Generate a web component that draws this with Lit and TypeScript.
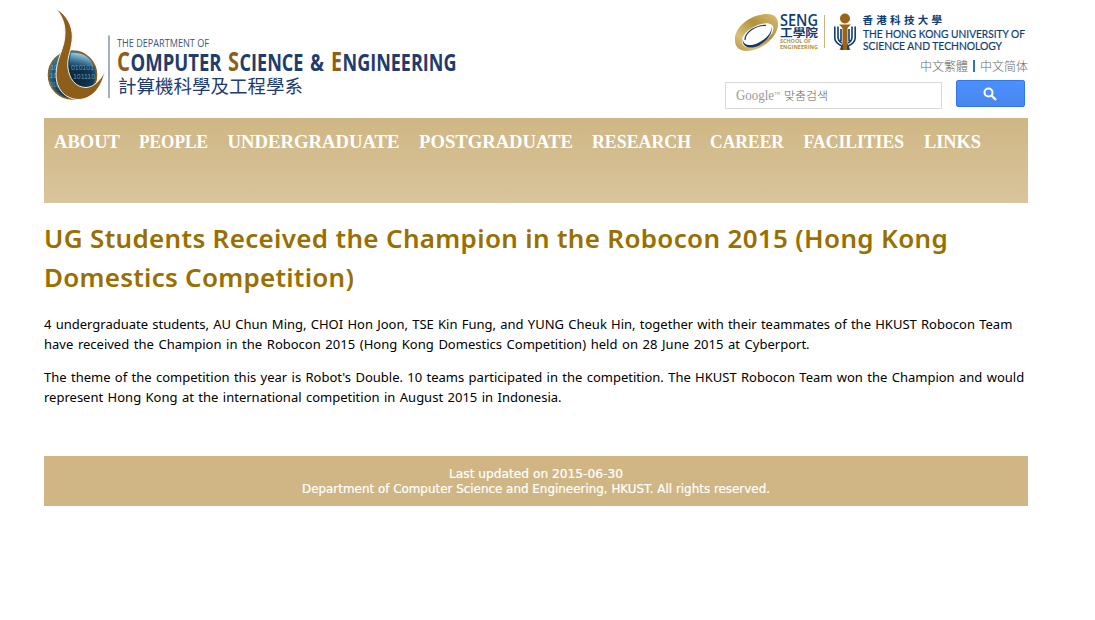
import { LitElement, html, svg, css } from "lit";
import { customElement } from "lit/decorators.js";

const t = (x: number, y: number, size: number, len: number, cls: string, s: string) =>
  svg`<text x=${x} y=${y} font-size=${size} textLength=${len} lengthAdjust="spacingAndGlyphs" class=${cls}>${s}</text>`;

@customElement("dept-logo")
class DeptLogo extends LitElement {
  static styles = css`
    :host { display: block; }
    svg { display: block; overflow: visible; }
    text { font-family: "Open Sans", sans-serif; fill: #1f3c6c; }
    .thin { fill: #3c5680; }
    .b { font-weight: 700; }
    .g { font-weight: 700; fill: #8c5e19; }
    .cjk { font-family: "Noto Sans CJK TC", sans-serif; }
    .bin { font-family: "Liberation Sans", sans-serif; fill: #7fc0dc; opacity: 0.7; }
  `;
  render() {
    return html`<svg width="420" height="118" viewBox="44 0 420 118">
      <defs>
        <radialGradient id="o" cx="0.55" cy="0.6" r="0.6">
          <stop offset="0" stop-color="#0c2438" /><stop offset="0.6" stop-color="#123752" /><stop offset="1" stop-color="#2f80ab" />
        </radialGradient>
        <linearGradient id="h" x1="0.7" y1="0" x2="0.3" y2="1">
          <stop offset="0" stop-color="#c4e2f0" /><stop offset="1" stop-color="#2b789f" stop-opacity="0.3" />
        </linearGradient>
      </defs>
      <circle cx="72.500" cy="75" r="24" fill="url(#o)" stroke="#8c5e19" stroke-width="1.600" />
      <path d="M71 53C82 52 91 57 94 67C86 63 78 68 69 66Z" fill="url(#h)" />
      ${t(50, 70, 6.500, 8, "bin", "10")}${t(49.500, 78, 6.500, 8, "bin", "10")}${t(50, 87, 6.500, 9, "bin", "010")}
      ${t(71, 70, 6.500, 23, "bin", "010101")}${t(73, 79, 6.500, 22, "bin", "101110")}
      <path d="M56 8.500C67 15 72.500 26 72.300 37C72 49 67 56 67.800 67C69 79 76 87.500 86 87.500C95 87 101 79 105 71C102 87 92 99.500 78 99.500C65 99 56 89 56 75C56 58 65 49 65 33C65 23 62 16 56 8.500Z" fill="#8c5e19" stroke="#fff" stroke-width="0.900" />
      <path d="M109 35.500V98" stroke="#8792b3" stroke-width="1.500" />
      ${t(117, 47, 10.800, 92, "thin", "THE DEPARTMENT OF")}
      ${t(117, 70.500, 27, 13, "g", "C")}${t(130.500, 70.500, 23.700, 91, "b", "OMPUTER")}
      ${t(228, 70.500, 27, 11, "g", "S")}${t(239.500, 70.500, 23.700, 64, "b", "CIENCE")}
      ${t(310, 70.500, 23.700, 14, "b", "&")}
      ${t(331, 70.500, 27, 11, "g", "E")}${t(342.500, 70.500, 23.700, 114, "b", "NGINEERING")}
      ${t(118, 93, 18.5, 185, "cjk", "計算機科學及工程學系")}
    </svg>`;
  }
}

@customElement("school-logo")
class SchoolLogo extends LitElement {
  static styles = css`
    :host { display: block; }
    svg { display: block; overflow: visible; }
    text { font-family: Lato, sans-serif; fill: #0f3c74; }
    .m { stroke: #0f3c74; stroke-width: 0.2px; }
    .s { font-family: "Open Sans", sans-serif; font-weight: 600; }
    .g { fill: #b09343; font-family: "Open Sans", sans-serif; font-weight: 700; }
    .cjk { font-family: "Noto Sans CJK TC", sans-serif; font-weight: 700; }
  `;
  render() {
    return html`<svg width="296" height="56" viewBox="732 0 296 56">
      <defs>
        <linearGradient id="r" x1="0" y1="1" x2="1" y2="0">
          <stop offset="0" stop-color="#b3913b" /><stop offset="0.25" stop-color="#d9c178" /><stop offset="0.6" stop-color="#b3913b" /><stop offset="1" stop-color="#d9c178" />
        </linearGradient>
      </defs>
      <path fill-rule="evenodd" fill="url(#r)" d="M735 40C734 27 751 14 767 14C777 14 780 21 777 30C772 43 757 51 747 51C739 51 735 47 735 40ZM742 42C743 49 753 49 762 43C771 37 776 29 772 25C765 19 741 30 742 42Z" />
      <path fill="#15346c" d="M743 38C742 45 750 47 758 43C768 38 773 31 771 25C774 33 767 41 759 45.500C750 50 741 47 743 38Z" />
      <path fill="none" stroke="#15346c" stroke-width="1.200" d="M745 40C745 32 756 25 766 25.500" />
      ${t(780, 26, 16, 38, "s", "SENG")}
      ${t(780, 37, 11, 38, "cjk", "工學院")}
      ${t(780, 43, 5.8, 31, "g", "SCHOOL OF")}
      ${t(780, 49, 5.8, 38, "g", "ENGINEERING")}
      <path d="M824.500 15V48" stroke="#c9b37c" />
      <circle cx="845" cy="18.500" r="5" fill="#9b6416" />
      <path d="M839 24.500h12l-3.500 3.500v15l3 7h-11l3-7v-15z" fill="#9b6416" />
      <path d="M834.800 26.500V38Q835 43 842 46V50M838 26.500V37Q838 41 842 43M841 29V41M855.200 26.500V38Q855 43 848 46V50M852 26.500V37Q852 41 848 43M849 29V41" fill="none" stroke="#0f3c74" stroke-width="1.600" />
      <text class="cjk" x="862.500" y="24" font-size="10.500" textLength="79.500">香港科技大學</text>
      ${t(863, 37.500, 11.300, 162, "m", "THE HONG KONG UNIVERSITY OF")}
      ${t(863, 50, 11.300, 139, "m", "SCIENCE AND TECHNOLOGY")}
    </svg>`;
  }
}

@customElement("app-root")
class AppRoot extends LitElement {
  static styles = css`
    :host { display: block; background: #fff; min-height: 620px; color: #000; }
    * { box-sizing: border-box; }
    .page { width: 984px; margin-left: 44px; }
    header { height: 118px; display: flex; justify-content: space-between; }
    .right { display: flex; flex-direction: column; align-items: flex-end; }
    .lang { height: 24px; padding-bottom: 4px; display: flex; align-items: center; gap: 4px; font: 300 12px/20px "Noto Sans CJK TC", sans-serif; color: #666; }
    .sc { font-family: "Noto Sans CJK SC", sans-serif; }
    .bar { width: 2px; height: 12px; background: #2a7ab0; margin: 0 1px; }
    .search { display: flex; gap: 14px; padding-right: 3px; }
    .box { width: 217px; height: 27px; margin-top: 2px; border: 1px solid #d9d9d9; padding-left: 10px; display: flex; align-items: center; }
    .go { width: 69px; height: 27px; border: 1px solid #3079ed; border-radius: 2px; background: linear-gradient(#4d90fe, #4787ed); display: flex; align-items: center; justify-content: center; }
    .go svg { margin-right: 1px; }
    .google { font-family: "Liberation Serif", serif; fill: #999; }
    .ko { font-family: "Noto Sans CJK KR", sans-serif; fill: #666; font-weight: 300; }
    nav { height: 85px; background: linear-gradient(#cfb684, #d9c59c); }
    .menu { display: block; }
    .menu text { font: 700 19px "Liberation Serif", serif; fill: #fff; }
    h1 { margin: 16px 0 0; font: 600 26px/39px "Noto Sans", sans-serif; color: #996f00; white-space: nowrap; letter-spacing: 0.325px; }
    h1 span, p span { display: block; width: max-content; }
    h1 .b { letter-spacing: 0.25px; }
    p { margin: 0; padding-top: 13px; font: 13px/20px "Noto Sans", sans-serif; white-space: nowrap; }
    .l1 { word-spacing: 0.86px; }
    .l2 { word-spacing: 1.25px; }
    .l3 { word-spacing: 0.98px; }
    .l4 { word-spacing: 1.05px; }
    .first { padding-top: 17px; }
    footer { margin-top: 49px; height: 50px; padding-top: 10px; background: #cfb684; color: #fff; text-align: center; font: 12px/15px "DejaVu Sans Condensed", "DejaVu Sans", sans-serif; font-stretch: condensed; }
    footer svg { display: block; margin: 0 auto; }
    footer text { fill: #fff; stroke: #fff; stroke-width: 0.2px; }
  `;
  render() {
    const items: [string, number, number][] = [
      ["ABOUT", 10, 66], ["PEOPLE", 95, 69], ["UNDERGRADUATE", 183.5, 172], ["POSTGRADUATE", 375, 154],
      ["RESEARCH", 548, 99], ["CAREER", 666, 74], ["FACILITIES", 759.5, 100.500], ["LINKS", 880, 57],
    ];
    return html`<div class="page">
      <header>
        <dept-logo></dept-logo>
        <div class="right">
          <school-logo></school-logo>
          <div class="lang"><span>中文繁體</span><i class="bar"></i><span class="sc">中文简体</span></div>
          <div class="search">
            <div class="box"><svg width="110" height="24">
              <text class="google" x="0" y="16" font-size="15" textLength="38" lengthAdjust="spacingAndGlyphs">Google</text>
              <text class="google" x="38" y="12" font-size="6">™</text>
              <text class="ko" x="48" y="16" font-size="11.500" textLength="44" lengthAdjust="spacingAndGlyphs">맞춤검색</text>
            </svg></div>
            <div class="go"><svg width="14" height="14" viewBox="0 0 14 14" fill="none" stroke="#fff"><circle cx="5.500" cy="5.500" r="4" stroke-width="2" /><path d="M8.500 8.500L13 13" stroke-width="2.400" /></svg></div>
          </div>
        </div>
      </header>
      <nav><svg class="menu" width="984" height="50">${items.map(([s, x, w]) =>
        svg`<text x=${x} y="30" textLength=${w} lengthAdjust="spacingAndGlyphs">${s}</text>`)}</svg></nav>
      <h1><span>UG Students Received the Champion in the Robocon 2015 (Hong Kong</span><span class="b">Domestics Competition)</span></h1>
      <p class="first"><span class="l1">4 undergraduate students, AU Chun Ming, CHOI Hon Joon, TSE Kin Fung, and YUNG Cheuk Hin, together with their teammates of the HKUST Robocon Team</span><span class="l2">have received the Champion in the Robocon 2015 (Hong Kong Domestics Competition) held on 28 June 2015 at Cyberport.</span></p>
      <p><span class="l3">The theme of the competition this year is Robot's Double. 10 teams participated in the competition. The HKUST Robocon Team won the Champion and would</span><span class="l4">represent Hong Kong at the international competition in August 2015 in Indonesia.</span></p>
      <footer><svg width="480" height="32">
        <text x="153" y="12" textLength="174" lengthAdjust="spacingAndGlyphs">Last updated on 2015-06-30</text>
        <text x="6" y="27" textLength="468" lengthAdjust="spacingAndGlyphs">Department of Computer Science and Engineering, HKUST. All rights reserved.</text>
      </svg></footer>
    </div>`;
  }
}
